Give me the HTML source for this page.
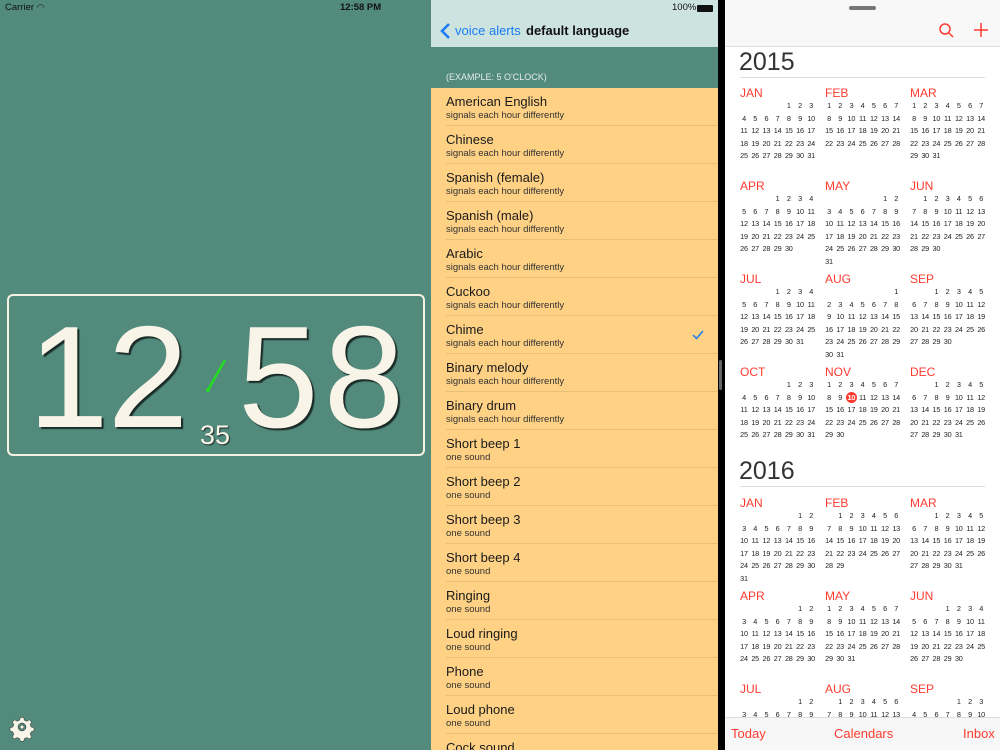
<!DOCTYPE html>
<html><head><meta charset="utf-8"><style>
*{margin:0;padding:0;box-sizing:border-box}
body{width:1000px;height:750px;overflow:hidden;position:relative;font-family:"Liberation Sans",sans-serif;background:#000}
.abs{position:absolute}
#left{left:0;top:0;width:431px;height:750px;background:#528a7c}
#mid{left:431px;top:0;width:287px;height:750px;background:#528a7c;overflow:hidden}
#right{left:725px;top:0;width:275px;height:750px;background:#fff;overflow:hidden}
.row{position:absolute;left:0;width:287px;height:38px;background:#fed185}
.row .t{position:absolute;left:15px;top:6px;font-size:13px;color:#1a1a1a}
.row .s{position:absolute;left:15px;top:22px;font-size:9.5px;color:#333}
.row .ln{position:absolute;left:15px;right:0;bottom:0;height:1px;background:#e8bf78}
.d{position:absolute;font-size:7.3px;color:#222;width:12px;text-align:center;line-height:10px;letter-spacing:-0.2px}
.m{position:absolute;font-size:12px;color:#ff3b30;line-height:14px}
.big{position:absolute;font-size:145px;line-height:190px;color:#f8f5e8;text-shadow:2px 2px 1px #1a2a26;white-space:nowrap}
</style></head><body>
<div id="left" class="abs">
 <div class="abs" style="left:5px;top:2px;font-size:9.5px;color:#111">Carrier <span style="font-size:9px">&#x25E0;</span></div>
 <div class="abs" style="left:340px;top:2px;font-size:9.5px;font-weight:bold;color:#111">12:58 PM</div>
 <div class="abs" style="left:7px;top:294px;width:418px;height:162px;border:2px solid #f6f2e3;border-radius:6px"></div>
 <div class="big" style="left:28px;top:282px;letter-spacing:-1px">12</div>
 <div class="big" style="left:238px;top:282px;letter-spacing:5px">58</div>
 <div class="abs" style="left:200px;top:419px;font-size:27px;line-height:32px;color:#f8f5e8;text-shadow:1px 1px 1px #1a2a26">35</div>
 <svg class="abs" style="left:0;top:0" width="431" height="750"><line x1="208" y1="390" x2="225" y2="360" stroke="#22dd22" stroke-width="2.5"/><circle cx="208" cy="390" r="2" fill="#22dd22"/>
 <g transform="translate(22,727) scale(0.8)" fill="#f8f5e8" stroke="#222" stroke-width="0.6">
 <path d="M-2,-12h4l1,3.5 3,1.3 3.2-1.8 2.8,2.8-1.8,3.2 1.3,3 3.5,1v4l-3.5,1-1.3,3 1.8,3.2-2.8,2.8-3.2-1.8-3,1.3-1,3.5h-4l-1-3.5-3-1.3-3.2,1.8-2.8-2.8 1.8-3.2-1.3-3-3.5-1v-4l3.5-1 1.3-3-1.8-3.2 2.8-2.8 3.2,1.8 3-1.3z"/>
 <circle r="5" fill="#528a7c"/><circle r="2.5" fill="#f8f5e8"/></g></svg>
</div>
<div id="mid" class="abs">
 <div class="abs" style="left:0;top:0;width:287px;height:47px;background:#cde3df"></div>
 <div class="abs" style="left:241px;top:2px;font-size:9.5px;color:#111">100%</div>
 <div class="abs" style="left:266px;top:5px;width:16px;height:7px;background:#111;border-radius:1px"></div>
 <svg class="abs" style="left:9px;top:23px" width="12" height="16"><path d="M9,1 L2,8 L9,15" stroke="#1a7cf5" stroke-width="2.5" fill="none"/></svg>
 <div class="abs" style="left:24px;top:23px;font-size:13px;color:#1a7cf5">voice alerts</div>
 <div class="abs" style="left:95px;top:23px;font-size:13px;font-weight:bold;color:#111">default language</div>
 <div class="abs" style="left:15px;top:72px;font-size:9px;color:#e3ece9">(EXAMPLE: 5 O'CLOCK)</div>
 <div id="rows"></div>
</div>
<div class="abs" style="left:719px;top:360px;width:3px;height:30px;background:#666;border-radius:2px"></div>
<div id="right" class="abs">
 <div class="abs" style="left:0;top:0;width:275px;height:47px;background:#f8f8f8;border-bottom:1px solid #ddd"></div>
 <div class="abs" style="left:124px;top:6px;width:27px;height:4px;background:#777;border-radius:2px"></div>
 <svg class="abs" style="left:213px;top:22px" width="60" height="18"><circle cx="7" cy="7" r="5" stroke="#ff3b30" stroke-width="1.5" fill="none"/><line x1="11" y1="11" x2="15" y2="15" stroke="#ff3b30" stroke-width="1.5"/><path d="M43,1v14M36,8h14" stroke="#ff3b30" stroke-width="1.5"/></svg>
 <div id="cal"></div>
 <div class="abs" style="left:0;top:717px;width:275px;height:33px;background:#f7f7f7;border-top:1px solid #ddd"></div>
 <div class="abs" style="left:6px;top:726px;font-size:13px;color:#ff3b30">Today</div>
 <div class="abs" style="left:109px;top:726px;font-size:13px;color:#ff3b30">Calendars</div>
 <div class="abs" style="left:238px;top:726px;font-size:13px;color:#ff3b30">Inbox</div>
</div>
<script>
var items=[["American English",1],["Chinese",1],["Spanish (female)",1],["Spanish (male)",1],["Arabic",1],["Cuckoo",1],["Chime",1],["Binary melody",1],["Binary drum",1],["Short beep 1",0],["Short beep 2",0],["Short beep 3",0],["Short beep 4",0],["Ringing",0],["Loud ringing",0],["Phone",0],["Loud phone",0],["Cock sound",0]];
var h="";items.forEach(function(it,i){h+='<div class="row" style="top:'+(88+i*38)+'px"><div class="t">'+it[0]+'</div><div class="s">'+(it[1]?"signals each hour differently":"one sound")+'</div><div class="ln"></div>'+(it[0]=="Chime"?'<svg style="position:absolute;left:261px;top:14px" width="12" height="10"><path d="M1,5 L4.5,8.5 L11,1" stroke="#1a7cf5" stroke-width="1.5" fill="none"/></svg>':'')+'</div>';});
document.getElementById("rows").innerHTML=h;
var M=["JAN","FEB","MAR","APR","MAY","JUN","JUL","AUG","SEP","OCT","NOV","DEC"],c="";
function year(y,hy,my){c+='<div class="abs" style="left:14px;top:'+(hy-14)+'px;font-size:25px;color:#333">'+y+'</div><div class="abs" style="left:15px;top:'+(hy+15)+'px;width:245px;height:1px;background:#ddd"></div>';
for(var m=0;m<12;m++){var cx=15+(m%3)*85,ry=my+Math.floor(m/3)*93;c+='<div class="m" style="left:'+cx+'px;top:'+(ry-7)+'px">'+M[m]+'</div>';
var st=new Date(y,m,1).getDay(),n=new Date(y,m+1,0).getDate();for(var d=1;d<=n;d++){var p=st+d-1,col=p%7,r=Math.floor(p/7),x=cx+4+col*11.2-6,yy=ry+13+r*12.5-5;
if(y==2015&&m==10&&d==10)c+='<div class="abs" style="left:'+(x+1)+'px;top:'+(yy-0.5)+'px;width:11px;height:11px;border-radius:50%;background:#ff3b30"></div><div class="d" style="left:'+x+'px;top:'+yy+'px;color:#fff;font-weight:bold">'+d+'</div>';
else c+='<div class="d" style="left:'+x+'px;top:'+yy+'px">'+d+'</div>';}}}
year(2015,62,93);year(2016,471,503);
document.getElementById("cal").innerHTML=c;
</script>
</body></html>
